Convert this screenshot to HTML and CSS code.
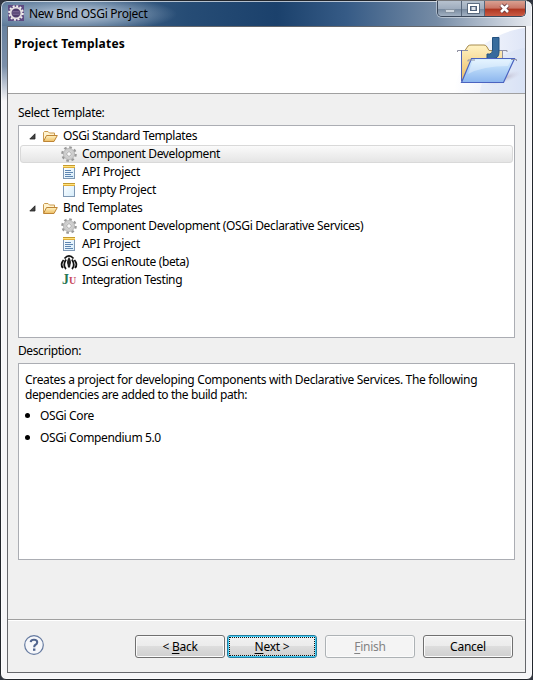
FILE: index.html
```html
<!DOCTYPE html>
<html lang="en">
<head>
<meta charset="utf-8">
<title>New Bnd OSGi Project</title>
<link rel="stylesheet" href="styles.css">
</head>
<body>
<svg class="defs" width="0" height="0">
  <defs>
    <linearGradient id="gold" x1="0" y1="0" x2="0" y2="1"><stop offset="0" stop-color="#fff3c4"/><stop offset="1" stop-color="#edbd62"/></linearGradient>
    <linearGradient id="blue" x1="0" y1="0" x2="0" y2="1"><stop offset="0" stop-color="#d9f1ff"/><stop offset="1" stop-color="#8bb5ee"/></linearGradient>
    <linearGradient id="paper" x1="0" y1="0" x2="1" y2="1"><stop offset="0" stop-color="#fff"/><stop offset="1" stop-color="#d5ecfa"/></linearGradient>
    <linearGradient id="swoosh" x1="0" y1="0" x2="1" y2="0"><stop offset="0" stop-color="#fff"/><stop offset="1" stop-color="#dfe6f7"/></linearGradient>
    <radialGradient id="shade"><stop offset="0" stop-color="#b9b4c8"/><stop offset="1" stop-color="#d8dcec" stop-opacity="0"/></radialGradient>
    <symbol id="folder" viewBox="0 0 16 16">
      <path d="M1.500 13V4.500L2.500 3.500H6L7.500 5H12.500V8" fill="#fff3cf" stroke="#c99a50"/>
      <path d="M1.500 13.500L4.500 7.500H15.300L12 13.500Z" fill="url(#gold)" stroke="#be8536"/>
    </symbol>
    <symbol id="gear" viewBox="0 0 16 16">
      <circle cx="8" cy="8" r="6.600" fill="none" stroke="#999" stroke-width="2.400" stroke-dasharray="2.600 2.584"/>
      <circle cx="8" cy="8" r="4.300" fill="#eee" stroke="#cdcdcd" stroke-width="2.800"/>
      <circle cx="8" cy="8" r="5.600" fill="none" stroke="#a9a9a9" stroke-width=".6"/>
      <circle cx="8" cy="8" r="2.300" fill="#fafafa" stroke="#a0a0a0" stroke-width=".9"/>
    </symbol>
    <symbol id="page" viewBox="0 0 16 16">
      <rect x="2.500" y="1.500" width="11" height="13" fill="url(#paper)" stroke="#7f98b3"/>
      <rect x="2" y="1" width="12" height="1" fill="#c49a30"/><rect x="2" y="2" width="12" height="1" fill="#ffe37b"/><rect x="2" y="3" width="12" height="1" fill="#e0ad3a"/>
    </symbol>
    <symbol id="lines" viewBox="0 0 16 16">
      <path d="M4 6.500H10M4 8.500H12M4 10.500H10M4 12.500H12" stroke="#5f86b2"/>
    </symbol>
  </defs>
</svg>
<div class="window">
  <header class="titlebar">
    <svg class="appicon" viewBox="0 0 16 16"><rect width="16" height="16" fill="#5d4b83"/><circle cx="8" cy="8" r="6.800" fill="none" stroke="#f3f0ee" stroke-width="2" stroke-dasharray="2 1.560"/><circle cx="8" cy="8" r="5.400" fill="#4e3c6c" stroke="#e4e0e2" stroke-width="1.800"/><path d="M4.500 6.500H11.500M4 8H12M4.500 9.500H11.500" stroke="#8d79a6" stroke-width=".6"/></svg>
    <span class="caption">New Bnd OSGi Project</span>
    <div class="controls">
      <span class="ctl min"><svg width="24" height="15"><rect x="7.500" y="8.500" width="9" height="3" fill="#d0d7df" stroke="#8794a3"/></svg></span>
      <span class="ctl max"><svg width="22" height="15"><rect x="7" y="4" width="9" height="7" fill="none" stroke="#4b5b70" stroke-width="3.600"/><rect x="7" y="4" width="9" height="7" fill="#50617a" stroke="#fff" stroke-width="2"/><rect x="9.500" y="6" width="4" height="3" fill="#dfe4ea"/></svg></span>
      <span class="ctl close"><svg width="40" height="15"><path d="M16 4L23 11M23 4L16 11" stroke="#64353a" stroke-width="4.200"/><path d="M16 4L23 11M23 4L16 11" stroke="#fff" stroke-width="2.600"/></svg></span>
    </div>
  </header>
  <main class="client">
    <section class="banner">
      <h1>Project Templates</h1>
      <svg class="art" width="75" height="66" viewBox="450 27 75 66">
        <path d="M454 93C456 63 488 32 525 28V93Z" fill="url(#swoosh)"/>
        <path d="M480 93C482 72 498 52 525 48V93Z" fill="#c9d6f1" opacity=".25"/>
        <ellipse cx="504" cy="78" rx="19" ry="5" fill="url(#shade)" transform="rotate(-18 504 78)"/>
        <path d="M461.500 81V50.500H465L468 46Q469 45 471 45H484Q486 45 487 47L489 50.500H502.500V62" fill="url(#gold)" stroke="#a88c4e"/>
        <path d="M457.500 52V50.500H468M461.500 50V81M498 50.500H507V52M502.500 50V59" fill="none" stroke="#8e8fa0"/>
        <path d="M461.500 50V81" stroke="#5263b5"/>
        <path d="M492.500 37.500H499V52Q499 58.500 493 58.500H487V54H489.500Q492.500 54 492.500 50Z" fill="#376b9d" stroke="#235280"/>
        <path d="M471.500 58.500H514.500L503.500 82.500H461.500Z" fill="url(#blue)" stroke="#4a63c0" stroke-width="1.200"/>
        <path d="M473 60H511L508 66Q483 66 468 74Z" fill="#fff" opacity=".35"/>
        <path d="M468 61.500V60H475M511 59.500H516.500V61" fill="none" stroke="#8e91a8"/>
      </svg>
    </section>
    <section class="content">
      <div class="label l1">Select Template:</div>
      <div class="tree">
        <div class="row group"><svg class="arrow" viewBox="0 0 7 7"><path d="M6 .8V6H.8Z" fill="#444" stroke="#222" stroke-width=".8"/></svg><svg class="icon"><use href="#folder"/></svg><span class="t1">OSGi Standard Templates</span></div>
        <div class="row item selected"><svg class="icon"><use href="#gear"/></svg><span class="t2">Component Development</span></div>
        <div class="row item"><svg class="icon"><use href="#page"/><use href="#lines"/></svg><span class="t3">API Project</span></div>
        <div class="row item"><svg class="icon"><use href="#page"/></svg><span class="t4">Empty Project</span></div>
        <div class="row group"><svg class="arrow" viewBox="0 0 7 7"><path d="M6 .8V6H.8Z" fill="#444" stroke="#222" stroke-width=".8"/></svg><svg class="icon"><use href="#folder"/></svg><span class="t5">Bnd Templates</span></div>
        <div class="row item"><svg class="icon"><use href="#gear"/></svg><span class="t6">Component Development (OSGi Declarative Services)</span></div>
        <div class="row item"><svg class="icon"><use href="#page"/><use href="#lines"/></svg><span class="t3">API Project</span></div>
        <div class="row item"><svg class="icon" viewBox="0 0 16 16"><path d="M3.500 4.500Q8-.8 12.500 4.500" fill="none" stroke="#111" stroke-width="1.800"/><path d="M2.600 6Q-1.200 10.500 2 14M13.400 6Q17.200 10.500 14 14M5 5.500Q1.500 11.500 5 15M11 5.500Q14.500 11.500 11 15" fill="none" stroke="#111" stroke-width="1.800"/><path d="M8 3Q5 7.500 6.500 10.500L7 13.500H9L9.500 10.500Q11 7.500 8 3Z" fill="#222"/></svg><span class="t7">OSGi enRoute (beta)</span></div>
        <div class="row item"><span class="icon junit"><b>J</b><i>U</i></span><span class="t8">Integration Testing</span></div>
      </div>
      <div class="label l2">Description:</div>
      <div class="description">
        <p><span class="d1">Creates a project for developing Components with Declarative Services. The following</span><br><span class="d2">dependencies are added to the build path:</span></p>
        <ul><li><span class="d3">OSGi Core</span></li><li><span class="d4">OSGi Compendium 5.0</span></li></ul>
      </div>
    </section>
    <footer class="footer">
      <svg class="help" viewBox="0 0 20 20"><circle cx="10" cy="10" r="9.300" fill="#f6f7fa" stroke="#657aa0" stroke-width="1.200"/><path d="M6.700 7.200Q7 4.800 10 4.800Q13.200 4.800 13.200 7.300Q13.200 8.900 11.500 9.800Q10.200 10.500 10.200 12.200" fill="none" stroke="#50648e" stroke-width="2.100"/><rect x="9" y="13.500" width="2.400" height="2.300" fill="#50648e"/></svg>
      <button class="btn back"><span>&lt; <u>B</u>ack</span></button>
      <button class="btn next"><span><u>N</u>ext &gt;</span></button>
      <button class="btn finish" disabled><span><u>F</u>inish</span></button>
      <button class="btn cancel"><span>Cancel</span></button>
    </footer>
  </main>
</div>
</body>
</html>
```
FILE: styles.css
```css
* { box-sizing: border-box; }
html, body { margin: 0; height: 100%; }
body { width: 533px; height: 680px; overflow: hidden; background: #303540; font: 12px/18px "Noto Sans", sans-serif; color: #000; }
.defs { position: absolute; }
.window { height: 680px; border: 1px solid #22262c; border-radius: 7px 7px 6px 6px; padding: 0 6px 6px; display: flex; flex-direction: column;
  background: radial-gradient(ellipse 100px 18px at 76px 13px, rgba(185,200,218,.8) 25%, rgba(165,185,205,.5) 60%, transparent 100%) 0 0 / 100% 25px no-repeat,
    linear-gradient(90deg, #5b7898, #264c75 35%, #1b416c 52%, #365b86 65%, #758ba5 82%, #d6dce5 97%, #e8ebf0) 0 0 / 100% 25px no-repeat,
    linear-gradient(#5b7898, #7b8fa9 65%, #f6f6f8) 0 0 / 8px 100px no-repeat, #f6f6f8;
  box-shadow: inset 0 0 0 1px rgba(255,255,255,.65); }
.titlebar { height: 25px; flex: none; display: flex; align-items: flex-start; padding-left: 1px; }
.appicon { width: 16px; height: 16px; margin-top: 4px; }
.caption { margin: 4px 0 0 5px; flex: 1; white-space: nowrap; letter-spacing: -.27px; }
.controls { display: flex; height: 16px; border: 1px solid #3b485a; border-top: 0; border-radius: 0 0 5px 5px; overflow: hidden; box-shadow: 0 0 0 1px rgba(255,255,255,.4); }
.ctl { height: 16px; background: linear-gradient(#b7c2cf, #9eacbd 48%, #77899e 50%, #a9b7c8); border-right: 1px solid #56667b; }
.min { width: 24px; }
.max { width: 23px; }
.ctl svg { display: block; }
.close { width: 40px; border: 0; background: linear-gradient(#d9a091, #c97565 45%, #ad3520 50%, #cf614a); }
.client { flex: 1; border: 1px solid #65676b; background: #f0f0f0; display: flex; flex-direction: column; }
.banner { height: 67px; background: #fff; border-bottom: 1px solid #a0a0a0; display: flex; justify-content: space-between; flex: none; }
h1 { margin: 8px 0 0 6px; font-size: 12px; line-height: 18px; letter-spacing: .24px; }
.content { padding: 10px 10px 0; height: 525px; }
.label { height: 18px; }
.l1 { letter-spacing: -.33px; }
.tree { height: 213px; margin-top: 3px; border: 1px solid #abadb3; background: #fff; padding: 1px; }
.row { display: flex; align-items: center; height: 18px; white-space: nowrap; }
.group { padding-left: 9px; }
.item { padding-left: 41px; }
.arrow { width: 7px; height: 7px; margin-right: 6px; }
.icon { width: 16px; height: 16px; margin-right: 5px; flex: none; overflow: visible; }
.selected { border: 1px solid #d9d9d9; border-radius: 3px; padding-left: 40px; background: linear-gradient(#fafafa, #e5e5e5); }
.t1 { letter-spacing: -.4px; }
.t2, .t6 { letter-spacing: -.35px; }
.t3, .t4, .t5 { letter-spacing: -.31px; }
.t7, .t8 { letter-spacing: -.37px; }
.junit { font: bold 14px/16px "Liberation Serif", serif; display: flex; color: #287653; padding-left: 1px; }
.junit b { width: 7px; }
.junit i { font-style: normal; font-size: 10px; line-height: 18px; color: #c8485c; }
.l2 { margin-top: 4px; letter-spacing: -.4px; }
.description { height: 197px; margin-top: 3px; border: 1px solid #abadb3; background: #fff; padding: 8px 6px; line-height: 15px; white-space: nowrap; }
.d1 { letter-spacing: -.33px; }
.d2 { letter-spacing: -.41px; }
.d3, .d4 { letter-spacing: -.36px; }
p { margin: 0; }
ul { list-style: none; margin: 6px 0 0; padding: 0; }
li { height: 15px; margin-bottom: 7px; display: flex; align-items: center; }
li::before { content: ""; width: 5px; height: 5px; background: #000; border-radius: 50%; margin-right: 10px; }
.footer { flex: 1; border-top: 1px solid #a0a0a0; box-shadow: inset 0 1px #fff; display: flex; align-items: flex-start; padding: 15px 11px 0 16px; }
.help { width: 20px; height: 20px; margin-right: 91px; }
.btn { width: 90px; height: 23px; padding: 0; border: 1px solid #707070; border-radius: 3px; background: linear-gradient(#f2f2f2, #ebebeb 49%, #ddd 50%, #cfcfcf); box-shadow: inset 0 0 0 1px #fbfbfb; font: inherit; line-height: 18px; color: #000; letter-spacing: -.25px; }
.btn span { display: block; }
.next { margin: 0 8px 0 2px; border-color: #237c9e; box-shadow: inset 0 0 0 1px #43cdf5; padding: 1px; }
.next span { border: 1px dotted #111; height: 19px; line-height: 17px; }
.finish { border-color: #adb2b5; background: #f4f4f4; color: #838383; margin-right: 8px; }
u { text-underline-offset: 2px; }
```
